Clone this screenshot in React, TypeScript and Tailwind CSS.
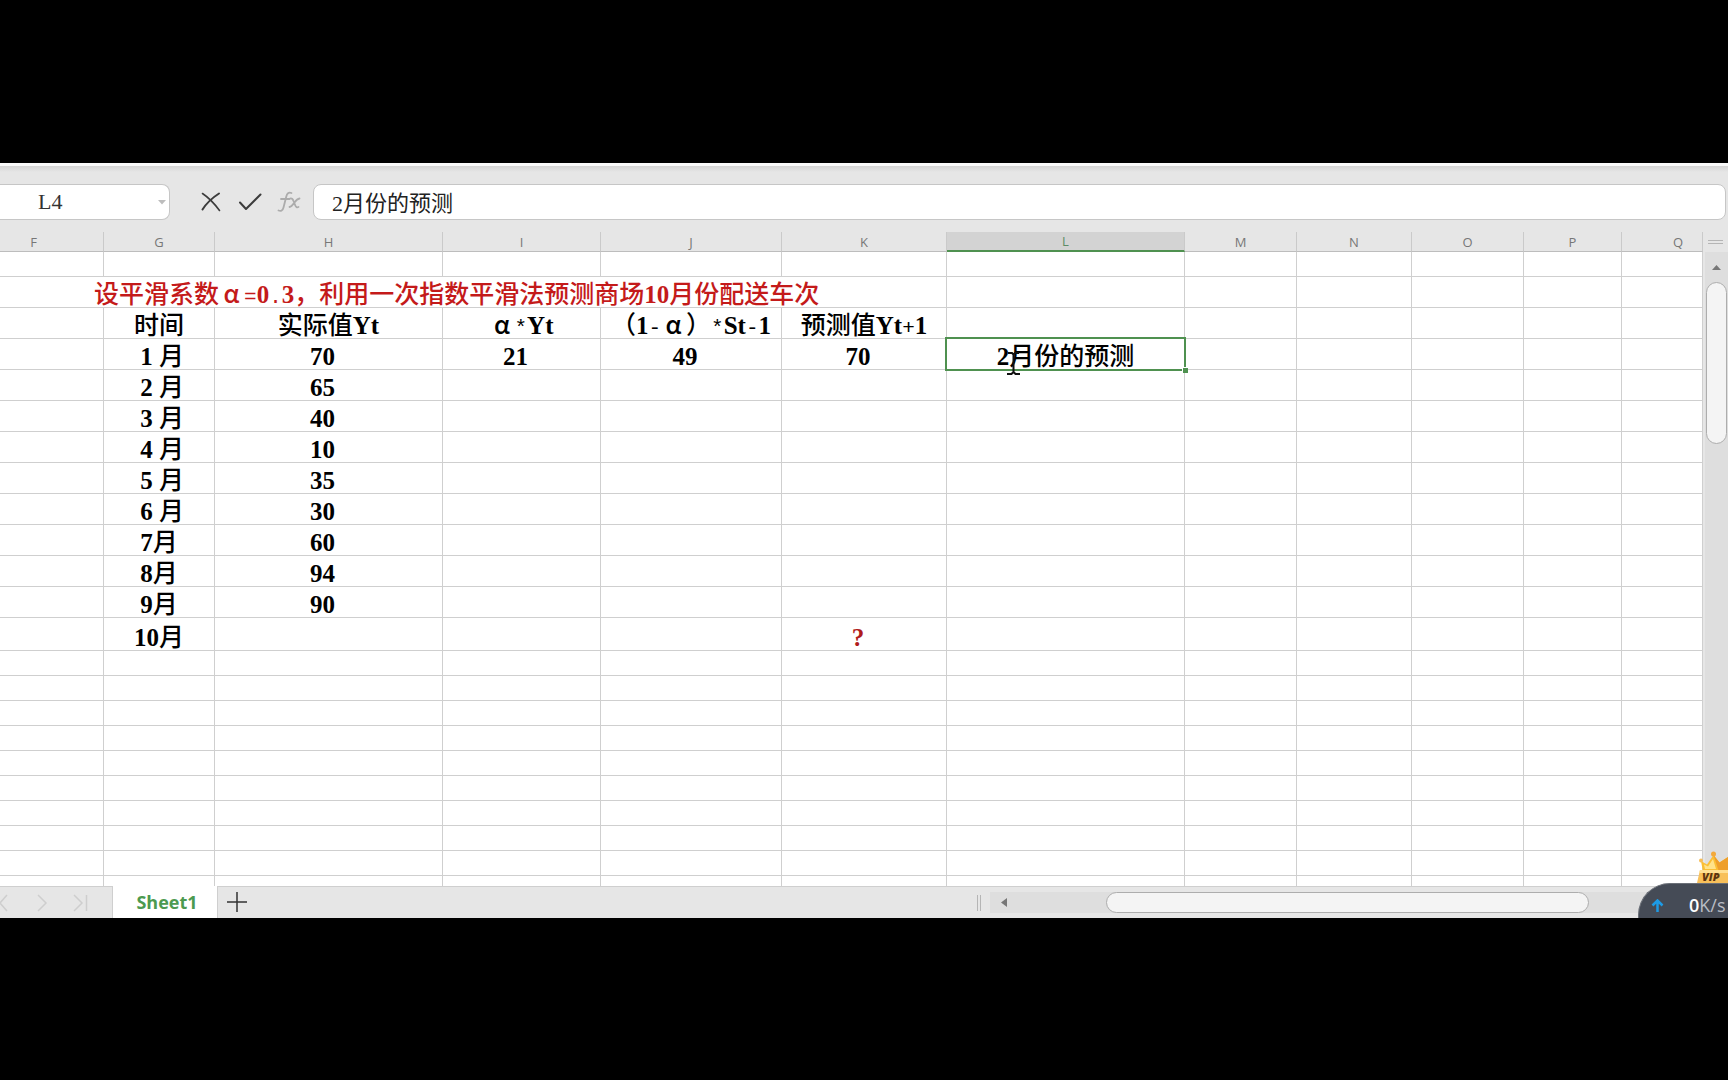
import React from 'react';

const COLUMNS = [
  { id: 'F', col: 'w-[104px]', pad: 'pr-9' },
  { id: 'G', col: 'w-[111px]', pad: '' },
  { id: 'H', col: 'w-[228px]', pad: '' },
  { id: 'I', col: 'w-[158px]', pad: '' },
  { id: 'J', col: 'w-[181px]', pad: '' },
  { id: 'K', col: 'w-[165px]', pad: '' },
  { id: 'L', col: 'w-[238px]', pad: '' },
  { id: 'M', col: 'w-[112px]', pad: '' },
  { id: 'N', col: 'w-[115px]', pad: '' },
  { id: 'O', col: 'w-[112px]', pad: '' },
  { id: 'P', col: 'w-[98px]', pad: '' },
  { id: 'Q', col: '', pad: 'pl-8' },
];

type Row = { height: string; cells: Record<string, string> };

const month = (label: string, value: string, extra: Record<string, string> = {}): Row => ({
  height: 'h-[31px]',
  cells: { G: label, H: value, ...extra },
});

const DATA: Row[] = [
  {
    height: 'h-[31px]',
    cells: { G: '时间', H: '实际值Yt', I: 'α*Yt', J: '（1-α）*St-1', K: '预测值Yt+1' },
  },
  month('\u00a01 月', '70', { I: '21', J: '49', K: '70', L: '2月份的预测' }),
  month('\u00a02 月', '65'),
  month('\u00a03 月', '40'),
  month('\u00a04 月', '10'),
  month('\u00a05 月', '35'),
  month('\u00a06 月', '30'),
  month('7月', '60'),
  month('8月', '94'),
  month('9月', '90'),
  { height: 'h-[33px]', cells: { G: '10月', K: '?' } },
];

const EMPTY: Row[] = Array.from({ length: 9 }, () => ({ height: 'h-[25px]', cells: {} }));

const CELL = 'border-r border-b border-[#cfcfcf] p-0';
const LINE = 'h-[27px] leading-[30px] whitespace-nowrap';

/* Symbols take a half-width monospace glyph, alpha a full-width box. */
function CellText({ text }: { text: string }) {
  return (
    <>
      {text.split(/([=*.+-]|α|[0-9A-Za-z?]+)/).map((part, i) => {
        if (part === 'α') {
          return <span key={i} className="inline-block w-[25px] text-center font-['Noto_Sans_CJK_SC',sans-serif] leading-none">α</span>;
        }
        if (/^[=*.+-]$/.test(part)) {
          return <span key={i} className="font-['Liberation_Mono',monospace] text-[21px] leading-none">{part}</span>;
        }
        return /^[0-9A-Za-z?]+$/.test(part) ? <span key={i} className="font-bold">{part}</span> : part;
      })}
    </>
  );
}

function Selection() {
  return (
    <>
      <span className="pointer-events-none absolute -inset-[2px] border-2 border-[#4f9150]" />
      <span className="absolute -right-[4px] -bottom-[4px] size-[6px] border-t border-l border-white bg-[#4f9150]" />
      <svg className="absolute top-[13px] left-[59px]" width="15" height="24" viewBox="0 0 15 24" fill="none" stroke="#111" strokeWidth="2">
        <path d="M2 1h4l1.500 1.500L9 1h4M7.500 2v19M1 22h4.500l2-2 2 2H14" />
      </svg>
    </>
  );
}

function SheetRow({ row }: { row: Row }) {
  return (
    <tr className={row.height}>
      {COLUMNS.map(({ id }) => {
        const text = row.cells[id];
        const numeric = text !== undefined && /^(\d+|\?)$/.test(text);
        return (
          <td
            key={id}
            className={`${CELL} align-bottom ${id === 'L' && text ? 'relative' : ''} ${numeric ? 'pr-3' : ''} ${text === '?' ? 'font-bold text-[#b01c1c]' : ''}`}
          >
            {text && (
              <div className={`text-center ${LINE}`}>
                <CellText text={text} />
              </div>
            )}
            {id === 'L' && text && <Selection />}
          </td>
        );
      })}
    </tr>
  );
}

function Toolbar() {
  return (
    <div className="flex h-[69px] flex-col bg-[#e6e6e6]">
      <div className="h-[3px] shrink-0 bg-[#fafafa]" />
      <div className="h-[6px] shrink-0 bg-linear-to-b from-[#d4d4d4] to-[#e6e6e6]" />
      <div className="mt-3 flex h-9 items-center pr-[2px]">
        <div className="flex h-9 w-[170px] items-center rounded-r-lg border border-l-0 border-[#c6c6c6] bg-white">
          <input
            aria-label="Name box"
            defaultValue="L4"
            className="w-[155px] min-w-0 pl-[38px] font-['Liberation_Serif',serif] text-[22px] leading-7 text-[#333] outline-none"
          />
          <button aria-label="Name list" className="flex h-full flex-1 items-center justify-center">
            <svg width="8" height="5" viewBox="0 0 8 5"><path d="M0 0h8L4 4.500z" fill="#bdbdbd" /></svg>
          </button>
        </div>
        <button aria-label="Cancel" className="ml-[31px] flex w-5 justify-center">
          <svg width="20" height="20" viewBox="0 0 20 20" fill="none" stroke="#3c3c3c" strokeLinecap="round">
            <path d="M1.500 1.500C6 4.500 13 11 18.500 18.500" strokeWidth="1.600" />
            <path d="M18 1.500C11 6 5 12 1.500 17.500" strokeWidth="2" />
          </svg>
        </button>
        <button aria-label="Enter" className="ml-[17px] flex w-6 justify-center">
          <svg width="24" height="18" viewBox="0 0 24 18" fill="none" stroke="#3c3c3c" strokeLinecap="round" strokeLinejoin="round" strokeWidth="2">
            <path d="M2 9.500l6 6.500L22.500 1.500" />
          </svg>
        </button>
        <button aria-label="Insert function" className="ml-[15px] flex w-6 justify-center">
          <svg width="24" height="22" viewBox="0 0 24 22" fill="none" stroke="#acacac" strokeLinecap="round" strokeWidth="1.800">
            <path d="M14.500 2C11.500.8 10 2.500 9.300 5.500L6.500 16.500C5.800 19.500 4 20.500 1.500 19.500M4 8h8.500" />
            <path d="M13 7.500c2-.6 2.800.5 3.500 2.500l1.800 4.500c.7 1.700 1.700 2.200 3.200 1.500M22.500 7.500c-2 .3-3.500 2-5 4-1.600 2.200-3 4.300-5 4.500" />
          </svg>
        </button>
        <input
          aria-label="Formula bar"
          defaultValue="2月份的预测"
          className="ml-3 h-9 min-w-0 flex-1 rounded-lg border border-[#c6c6c6] bg-white pb-[2px] pl-[18px] font-['Liberation_Serif','Noto_Sans_CJK_SC',serif] text-[22px] text-[#222] outline-none"
        />
      </div>
    </div>
  );
}

function Sheet() {
  return (
    <div className="flex">
      <table className="w-full min-w-0 flex-1 table-fixed border-separate border-spacing-0 bg-white font-['Liberation_Serif','Noto_Sans_CJK_SC',serif] text-[25px] font-medium text-black">
        <colgroup>
          {COLUMNS.map((c) => <col key={c.id} className={c.col} />)}
        </colgroup>
        <thead>
          <tr className="h-5">
            {COLUMNS.map(({ id, pad }) => (
              <th
                key={id}
                scope="col"
                className={`border-r border-r-[#cacaca] p-0 font-['Open_Sans',sans-serif] text-[13px] leading-[18px] font-normal ${pad} ${
                  id === 'L' ? 'border-b-2 border-b-[#4f9150] bg-[#d3d3d3] text-[#5d8c66]' : 'border-b border-b-[#bdbdbd] bg-[#e6e6e6] text-[#777]'
                }`}
              >
                {id}
              </th>
            ))}
          </tr>
        </thead>
        <tbody>
          <SheetRow row={{ height: 'h-[25px]', cells: {} }} />
          <tr className="h-[31px]">
            <td colSpan={6} className={`${CELL} pl-[94px] text-left align-bottom text-[#c41a1a]`}>
              <div className={LINE}>
                <CellText text="设平滑系数α=0.3，利用一次指数平滑法预测商场10月份配送车次" />
              </div>
            </td>
            {COLUMNS.slice(6).map(({ id }) => <td key={id} className={CELL} />)}
          </tr>
          {DATA.map((row, i) => <SheetRow key={i} row={row} />)}
          {EMPTY.map((row, i) => <SheetRow key={i} row={row} />)}
          <tr className="h-[10px]">
            {COLUMNS.map(({ id }) => <td key={id} className="border-r border-[#cfcfcf] p-0" />)}
          </tr>
        </tbody>
      </table>
      <div className="flex w-[25px] shrink-0 flex-col items-center bg-[#e6e6e6]">
        <div className="mt-2 h-1 w-[15px] border-y border-[#b5b5b5]" />
        <div className="mt-2 flex w-[23px] flex-1 flex-col items-center self-end bg-[#dedede]">
          <button aria-label="Scroll up" className="flex h-[30px] w-full items-center justify-center">
            <svg width="9" height="5" viewBox="0 0 9 5"><path d="M4.500 0L9 5H0z" fill="#777" /></svg>
          </button>
          <div role="scrollbar" aria-label="Vertical scroll" aria-controls="sheet" aria-valuenow={0} className="h-[162px] w-[21px] rounded-full border border-[#adadad] bg-[#f4f4f4]" />
        </div>
      </div>
    </div>
  );
}

function BottomBar() {
  return (
    <div className="flex h-8 items-stretch border-t border-[#cfcfcf] bg-[#e6e6e6]">
      <div className="flex w-[113px] items-center border-r border-[#cfcfcf] text-[#cecece]">
        <button aria-label="Previous sheet">
          <svg width="8" height="18" viewBox="0 0 8 18" fill="none" stroke="currentColor" strokeWidth="1.500"><path d="M7 1L0 9l7 8" /></svg>
        </button>
        <button aria-label="Next sheet" className="ml-[28px]">
          <svg width="12" height="18" viewBox="0 0 12 18" fill="none" stroke="currentColor" strokeWidth="1.500"><path d="M2 1l8 8-8 8" /></svg>
        </button>
        <button aria-label="Last sheet" className="ml-[25px]">
          <svg width="15" height="18" viewBox="0 0 15 18" fill="none" stroke="currentColor" strokeWidth="1.500"><path d="M1 1l8 8-8 8M13.500 1v16" /></svg>
        </button>
      </div>
      <button className="-mt-px w-[104px] bg-white pt-px pl-1 font-['Open_Sans',sans-serif] text-[18px] font-bold text-[#4c9a50]">Sheet1</button>
      <button aria-label="Add sheet" className="flex w-[38px] items-center justify-center border-l border-[#cfcfcf] pb-[2px]">
        <svg width="20" height="20" viewBox="0 0 20 20" stroke="#333" strokeWidth="1.500"><path d="M10 0v20M0 10h20" /></svg>
      </button>
      <div className="flex-1" />
      <div className="h-4 w-1 self-center border-x border-[#b5b5b5]" />
      <div className="my-[5px] ml-[9px] flex w-[738px] items-center bg-[#dedede]">
        <button aria-label="Scroll left" className="flex w-[27px] justify-center">
          <svg width="6" height="9" viewBox="0 0 6 9"><path d="M6 0v9L0 4.500z" fill="#777" /></svg>
        </button>
        <div role="scrollbar" aria-label="Horizontal scroll" aria-controls="sheet" aria-valuenow={50} className="ml-[89px] h-[21px] w-[483px] rounded-full border border-[#adadad] bg-[#f4f4f4]" />
      </div>
    </div>
  );
}

function SpeedWidget() {
  return (
    <div className="absolute right-0 bottom-0 w-[90px] overflow-hidden">
      <svg className="ml-[58px] block" width="32" height="32" viewBox="0 0 32 32">
        <path d="M7 21L5 10l6 3.500L17.500 4l6 7.500L32 6v15z" fill="#fbbf35" />
        <path d="M17.500 4l6 7.500L32 6v15h-9z" fill="#ee9f2c" />
        <path d="M9 18l-1-4.500 4 2L17 8l3 10z" fill="#ffe38a" />
        <circle cx="17.500" cy="3" r="2.500" fill="#f3a93c" />
        <circle cx="5" cy="9.500" r="2" fill="#f7bd58" />
        <path d="M4 19h28v13H1z" fill="#f8c05a" />
        <path d="M4 19h28v3H3z" fill="#ffdf92" />
        <text x="6" y="30" fontFamily="Open Sans" fontSize="11" fontWeight="800" fontStyle="italic" fill="#5b3410">VIP</text>
      </svg>
      <div className="flex h-[35px] items-center rounded-tl-[32px] border-t border-l border-[#6b7078] bg-[#454b56] pt-2 font-['Open_Sans',sans-serif] text-[18px] whitespace-nowrap text-[#b9bdc4]">
        <svg className="ml-[12px] shrink-0" width="13" height="13" viewBox="0 0 13 13" fill="none" stroke="#1d9be6" strokeWidth="2.500">
          <path d="M6.500 13V2M1.500 6.500l5-5 5 5" />
        </svg>
        <span className="ml-[25px] font-semibold text-white">0</span>
        <span>K/s</span>
      </div>
    </div>
  );
}

export default function App() {
  return (
    <div className="min-h-screen bg-black pt-[163px]">
      <main id="sheet" className="relative overflow-hidden">
        <Toolbar />
        <Sheet />
        <BottomBar />
        <SpeedWidget />
      </main>
    </div>
  );
}
